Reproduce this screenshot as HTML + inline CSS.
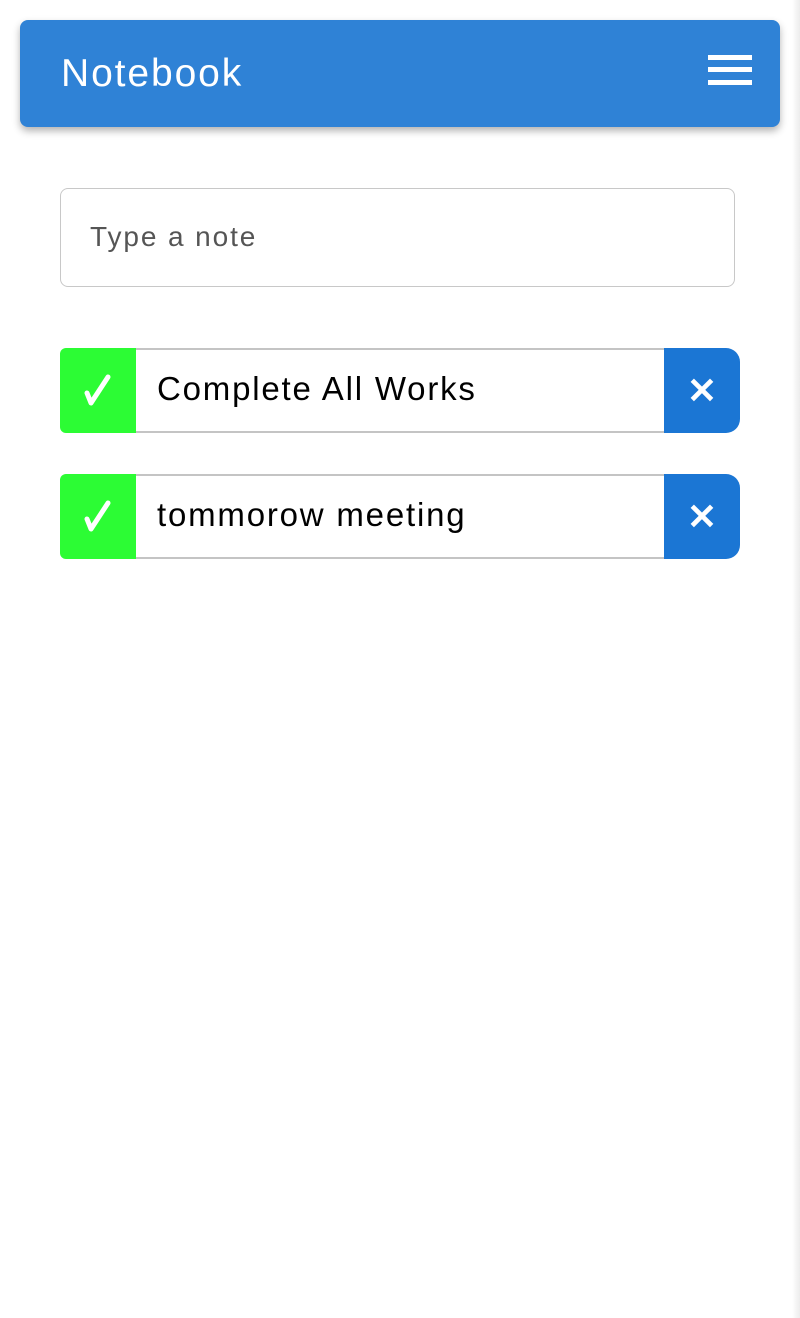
<!DOCTYPE html>
<html><head><style>
body{margin:0;width:800px;height:1318px;background:#fff;font-family:"Liberation Sans",sans-serif;position:relative;overflow:hidden}
.edge{position:absolute;right:0;top:0;width:8px;height:1318px;background:linear-gradient(to right,#fff,#ececec)}
.hdr{position:absolute;left:20px;top:20px;width:760px;height:107px;background:#2f82d6;border-radius:8px;box-shadow:0 4px 8px rgba(0,0,0,.3)}
.hdr .t{position:absolute;left:41px;top:30px;font-size:39px;letter-spacing:1.9px;color:#fff;line-height:48px}
.hb{position:absolute;left:688px;width:44px;height:5px;background:#fff}
.inp{position:absolute;left:60px;top:188px;width:673px;height:97px;border:1px solid #c8c8c8;border-radius:8px;box-sizing:content-box}
.inp span{position:absolute;left:29px;top:32px;font-size:28px;letter-spacing:1.9px;color:#555}
.item{position:absolute;left:60px;width:680px;height:85px}
.g{position:absolute;left:0;top:0;width:76px;height:85px;background:#2cfc34;border-radius:6px 0 0 6px}
.g svg{position:absolute;left:0;top:0}
.m{position:absolute;left:76px;top:0;width:588px;height:81px;border:2px solid #c4c4c4;border-left:none;border-right:none}
.m span{position:absolute;left:21px;top:20px;font-size:33px;letter-spacing:1.8px;color:#000}
.b{position:absolute;left:604px;top:0;width:76px;height:85px;background:#1b76d4;border-radius:0 14px 14px 0;color:#fff;font-size:36px;text-align:center;line-height:85px;font-weight:bold}
</style></head><body>
<div class="edge"></div>
<div class="hdr"><div class="t">Notebook</div>
<div class="hb" style="top:35px"></div><div class="hb" style="top:47px"></div><div class="hb" style="top:60px"></div></div>
<div class="inp"><span>Type a note</span></div>
<div class="item" style="top:348px"><div class="g"><svg width="76" height="85"><path d="M27 45 L31 55 L48 29" fill="none" stroke="#fff" stroke-width="5" stroke-linecap="round" stroke-linejoin="round"/></svg></div><div class="m"><span>Complete All Works</span></div><div class="b">✕</div></div>
<div class="item" style="top:474px"><div class="g"><svg width="76" height="85"><path d="M27 45 L31 55 L48 29" fill="none" stroke="#fff" stroke-width="5" stroke-linecap="round" stroke-linejoin="round"/></svg></div><div class="m"><span>tommorow meeting</span></div><div class="b">✕</div></div>
</body></html>
